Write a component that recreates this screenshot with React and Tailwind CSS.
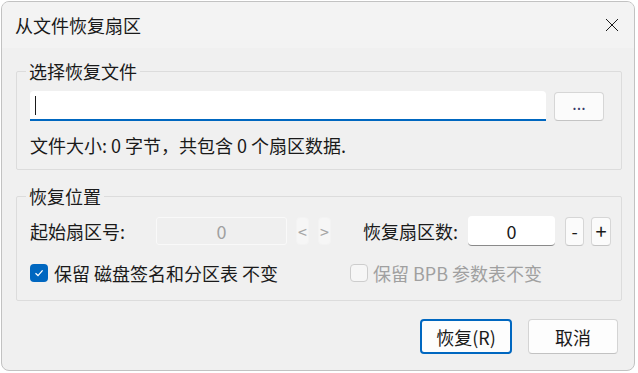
import React from "react";

const font = { fontFamily: '"Noto Sans CJK SC", "Noto Sans", sans-serif' };

const SmallButton = ({ children, disabled, className = "" }) => (
  <button
    className={`flex items-center justify-center rounded-[4px] text-[16px] leading-none ${
      disabled
        ? "bg-[#f6f6f6] text-[#a6a6a6] border border-[#f3f3f3]"
        : "bg-[#fbfbfb] text-[#1a1a1a] border border-[#d6d6d6] border-b-[#c4c4c4]"
    } ${className}`}
  >
    {children}
  </button>
);

export default function App() {
  return (
    <div className="w-[638px] h-[373px] bg-white pl-[1px] pt-[1px]" style={font}>
      <div className="w-[634px] h-[370px] border border-[#c2c2c2] rounded-[8px] bg-[#f0f0f0] overflow-hidden text-[18px] leading-[24px] text-[#1a1a1a]">
        {/* Title bar */}
        <div className="h-[46px] bg-[#f3f3f3] flex items-center justify-between pl-[13px] pr-[14px]">
          <span>从文件恢复扇区</span>
          <svg width="16" height="16" viewBox="0 0 16 16" className="text-[#1a1a1a]">
            <path d="M2 2 L14 14 M14 2 L2 14" stroke="currentColor" strokeWidth="1" fill="none" />
          </svg>
        </div>

        <div className="pt-[11px]">
          {/* File group */}
          <fieldset className="ml-[14px] w-[606px] border border-[#dcdcdc] rounded-[2px] pl-[13px] pr-[16px] pt-[8px] pb-[12px]">
            <legend className="ml-[-4px] px-[3px]">选择恢复文件</legend>
            <div className="flex items-center">
              <div className="w-[516px] h-[30px] bg-white rounded-t-[4px] border-b-2 border-[#0067c0] flex items-center pl-[5px]">
                <span className="w-px h-[19px] bg-[#1a1a1a]" />
              </div>
              <SmallButton className="ml-[8px] w-[50px] h-[29px] pb-[6px] text-[#3a3a6a]">...</SmallButton>
            </div>
            <div className="mt-[12px]">文件大小: 0 字节，共包含 0 个扇区数据.</div>
          </fieldset>

          {/* Position group */}
          <fieldset className="mt-[14px] ml-[14px] w-[606px] border border-[#dcdcdc] rounded-[2px] pl-[13px] pr-[8px] pt-[8px] pb-[15px]">
            <legend className="ml-[-4px] px-[3px]">恢复位置</legend>
            <div className="flex items-center h-[30px]">
              <span className="w-[126px]">起始扇区号:</span>
              <div className="w-[131px] h-[28px] bg-[#efefef] border border-[#f9f9f9] rounded-[3px] flex items-center justify-center text-[#a0a0a0]">
                0
              </div>
              <SmallButton disabled className="ml-[9px] w-[13px] h-[28px]">&lt;</SmallButton>
              <SmallButton disabled className="ml-[9px] w-[13px] h-[28px]">&gt;</SmallButton>
              <span className="ml-[32px] w-[105px]">恢复扇区数:</span>
              <div className="w-[87px] h-[30px] bg-white rounded-[4px] border-b border-[#8a8a8a] flex items-center justify-center">
                0
              </div>
              <SmallButton className="ml-[10px] w-[19px] h-[29px] text-[18px]">-</SmallButton>
              <SmallButton className="ml-[7px] w-[20px] h-[29px] text-[20px]">+</SmallButton>
            </div>
            <div className="flex items-center mt-[15px] h-[24px]">
              <div className="w-[320px] flex items-center">
                <span className="w-[18px] h-[18px] rounded-[4px] bg-[#0067c0] flex items-center justify-center">
                  <svg width="12" height="12" viewBox="0 0 12 12">
                    <path d="M2.5 6.3 L5 8.6 L9.6 3.4" stroke="white" strokeWidth="1.3" fill="none" />
                  </svg>
                </span>
                <span className="ml-[6px]">保留 磁盘签名和分区表 不变</span>
              </div>
              <div className="flex items-center text-[#a0a0a0]">
                <span className="w-[18px] h-[18px] rounded-[4px] bg-[#f6f6f6] border border-[#cdcdcd]" />
                <span className="ml-[5px]">保留 BPB 参数表不变</span>
              </div>
            </div>
          </fieldset>

          {/* Dialog buttons */}
          <div className="flex justify-end mt-[18px] pr-[16px] gap-[16px]">
            <button className="w-[92px] h-[35px] rounded-[4px] bg-[#fdfdfd] border-2 border-[#0067c0] flex items-center justify-center">
              恢复(R)
            </button>
            <button className="w-[90px] h-[35px] rounded-[4px] bg-[#fdfdfd] border border-[#d4d4d4] border-b-[#c2c2c2] flex items-center justify-center">
              取消
            </button>
          </div>
        </div>
      </div>
    </div>
  );
}
